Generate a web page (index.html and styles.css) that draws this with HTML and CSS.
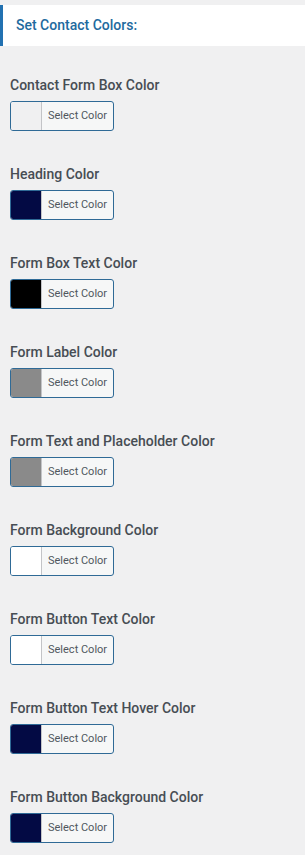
FILE: index.html
```html
<!DOCTYPE html>
<html>
<head>
	<title>Set Contact Colors</title>
	<link rel="stylesheet" href="styles.css">
</head>
<body>
	<div class="section-title">Set Contact Colors:</div>

	<ul class="color-list">
		<li>
			<label>Contact Form Box Color</label>
			<button type="button" class="color-result"><span class="swatch" style="background-color: #f0f0f1"></span><span class="text">Select Color</span></button>
		</li>
		<li>
			<label>Heading Color</label>
			<button type="button" class="color-result"><span class="swatch" style="background-color: #030a44"></span><span class="text">Select Color</span></button>
		</li>
		<li>
			<label>Form Box Text Color</label>
			<button type="button" class="color-result"><span class="swatch" style="background-color: #000000"></span><span class="text">Select Color</span></button>
		</li>
		<li>
			<label>Form Label Color</label>
			<button type="button" class="color-result"><span class="swatch" style="background-color: #8a8a8a"></span><span class="text">Select Color</span></button>
		</li>
		<li>
			<label>Form Text and Placeholder Color</label>
			<button type="button" class="color-result"><span class="swatch" style="background-color: #8a8a8a"></span><span class="text">Select Color</span></button>
		</li>
		<li>
			<label>Form Background Color</label>
			<button type="button" class="color-result"><span class="swatch" style="background-color: #ffffff"></span><span class="text">Select Color</span></button>
		</li>
		<li>
			<label>Form Button Text Color</label>
			<button type="button" class="color-result"><span class="swatch" style="background-color: #ffffff"></span><span class="text">Select Color</span></button>
		</li>
		<li>
			<label>Form Button Text Hover Color</label>
			<button type="button" class="color-result"><span class="swatch" style="background-color: #030a44"></span><span class="text">Select Color</span></button>
		</li>
		<li>
			<label>Form Button Background Color</label>
			<button type="button" class="color-result"><span class="swatch" style="background-color: #030a44"></span><span class="text">Select Color</span></button>
		</li>
	</ul>
</body>
</html>
```

FILE: styles.css
```css
html {
	background-color: #f0f0f1;
}
body {
	margin: 0;
	padding-top: 5px;
	font-family: Roboto, "Liberation Sans", sans-serif;
	color: #3c434a;
}

.section-title {
	background-color: #fff;
	border-left: 3px solid #2271b1;
	height: 41px;
	line-height: 41px;
	padding-left: 13px;
	font-size: 14px;
	font-weight: 500;
	color: #1e6a9e;
}

.color-list {
	margin: 0;
	padding: 31px 10px 0;
	list-style: none;
}
.color-list li {
	height: 89px;
}
.color-list label {
	display: block;
	font-size: 14px;
	font-weight: 500;
	line-height: 16px;
	height: 16px;
	margin-bottom: 8px;
	color: #474d54;
}

.color-result {
	display: flex;
	align-items: stretch;
	width: 104px;
	height: 30px;
	padding: 0;
	border: 1px solid #2f6a96;
	border-radius: 3px;
	background-color: #f6f7f7;
	overflow: hidden;
	cursor: pointer;
}
.swatch {
	width: 30px;
	border-right: 1px solid #c3c4c7;
}
.text {
	flex: 1;
	font-family: Roboto, "Liberation Sans", sans-serif;
	font-size: 11px;
	line-height: 28px;
	color: #50575e;
	text-align: left;
	padding-left: 6px;
}
```
